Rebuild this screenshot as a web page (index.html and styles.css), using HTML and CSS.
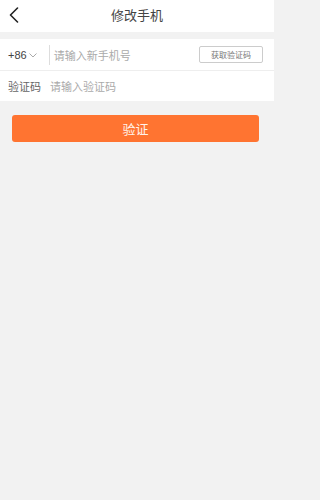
FILE: index.html
```html
<!DOCTYPE html>
<html lang="zh">
<head>
<meta charset="utf-8">
<link rel="stylesheet" href="styles.css">
</head>
<body>
<div class="page">
  <header class="header">
    <span class="back">
      <svg width="10" height="16" viewBox="0 0 10 16"><path d="M8.5 1 L1.5 8 L8.5 15" fill="none" stroke="#222" stroke-width="1.6" stroke-linecap="round" stroke-linejoin="round"/></svg>
    </span>
    <h1 class="title">修改手机</h1>
  </header>
  <div class="gap"></div>
  <section class="form">
    <div class="row row-phone">
      <span class="code">+86</span>
      <svg class="chev" width="8" height="5" viewBox="0 0 8 5"><path d="M0.5 0.5 L4 4 L7.5 0.5" fill="none" stroke="#aaa" stroke-width="1"/></svg>
      <span class="vline"></span>
      <span class="ph ph-phone">请输入新手机号</span>
      <span class="getcode">获取验证码</span>
    </div>
    <div class="row row-code">
      <span class="label">验证码</span>
      <span class="ph">请输入验证码</span>
    </div>
  </section>
  <div class="btnwrap">
    <div class="verify">验证</div>
  </div>
</div>
</body>
</html>
```

FILE: styles.css
```css
html, body {
  margin: 0;
  padding: 0;
  background: #f2f2f2;
  font-family: "Noto Sans CJK SC", "Noto Sans", sans-serif;
}
.page {
  width: 274px;
  min-height: 500px;
  background: #f2f2f2;
}
.header {
  height: 32px;
  box-sizing: border-box;
  padding-bottom: 3px;
  background: #fff;
  display: flex;
  align-items: center;
  justify-content: center;
  position: relative;
}
.back {
  position: absolute;
  left: 9px;
  top: 7px;
  display: flex;
}
.title {
  margin: 0;
  font-size: 13px;
  font-weight: normal;
  color: #444;
  line-height: 1;
}
.gap {
  height: 7px;
}
.form {
  background: #fff;
}
.row {
  display: flex;
  align-items: center;
  padding-left: 8px;
  font-size: 11px;
}
.row-phone {
  height: 31px;
  border-bottom: 1px solid #eeeeee;
  padding-right: 11px;
}
.row-code {
  height: 30px;
}
.code {
  color: #444;
  font-family: "Liberation Sans", "Noto Sans CJK SC", sans-serif;
}
.chev {
  margin-left: 2px;
  margin-top: 1px;
}
.vline {
  width: 1px;
  height: 20px;
  background: #dddddd;
  margin-left: 12px;
  margin-right: 4px;
}
.ph {
  color: #aaaaaa;
}
.ph-phone {
  flex: 1;
}
.label {
  color: #666;
  margin-right: 9px;
}
.getcode {
  width: 62px;
  height: 15px;
  border: 1px solid #cccccc;
  border-radius: 2px;
  font-size: 8px;
  color: #777;
  display: flex;
  align-items: center;
  justify-content: center;
}
.btnwrap {
  padding: 14px 15px 0 12px;
}
.verify {
  height: 27px;
  background: #ff7431;
  border-radius: 3px;
  color: #fff3ea;
  font-size: 13px;
  display: flex;
  align-items: center;
  justify-content: center;
}
```
